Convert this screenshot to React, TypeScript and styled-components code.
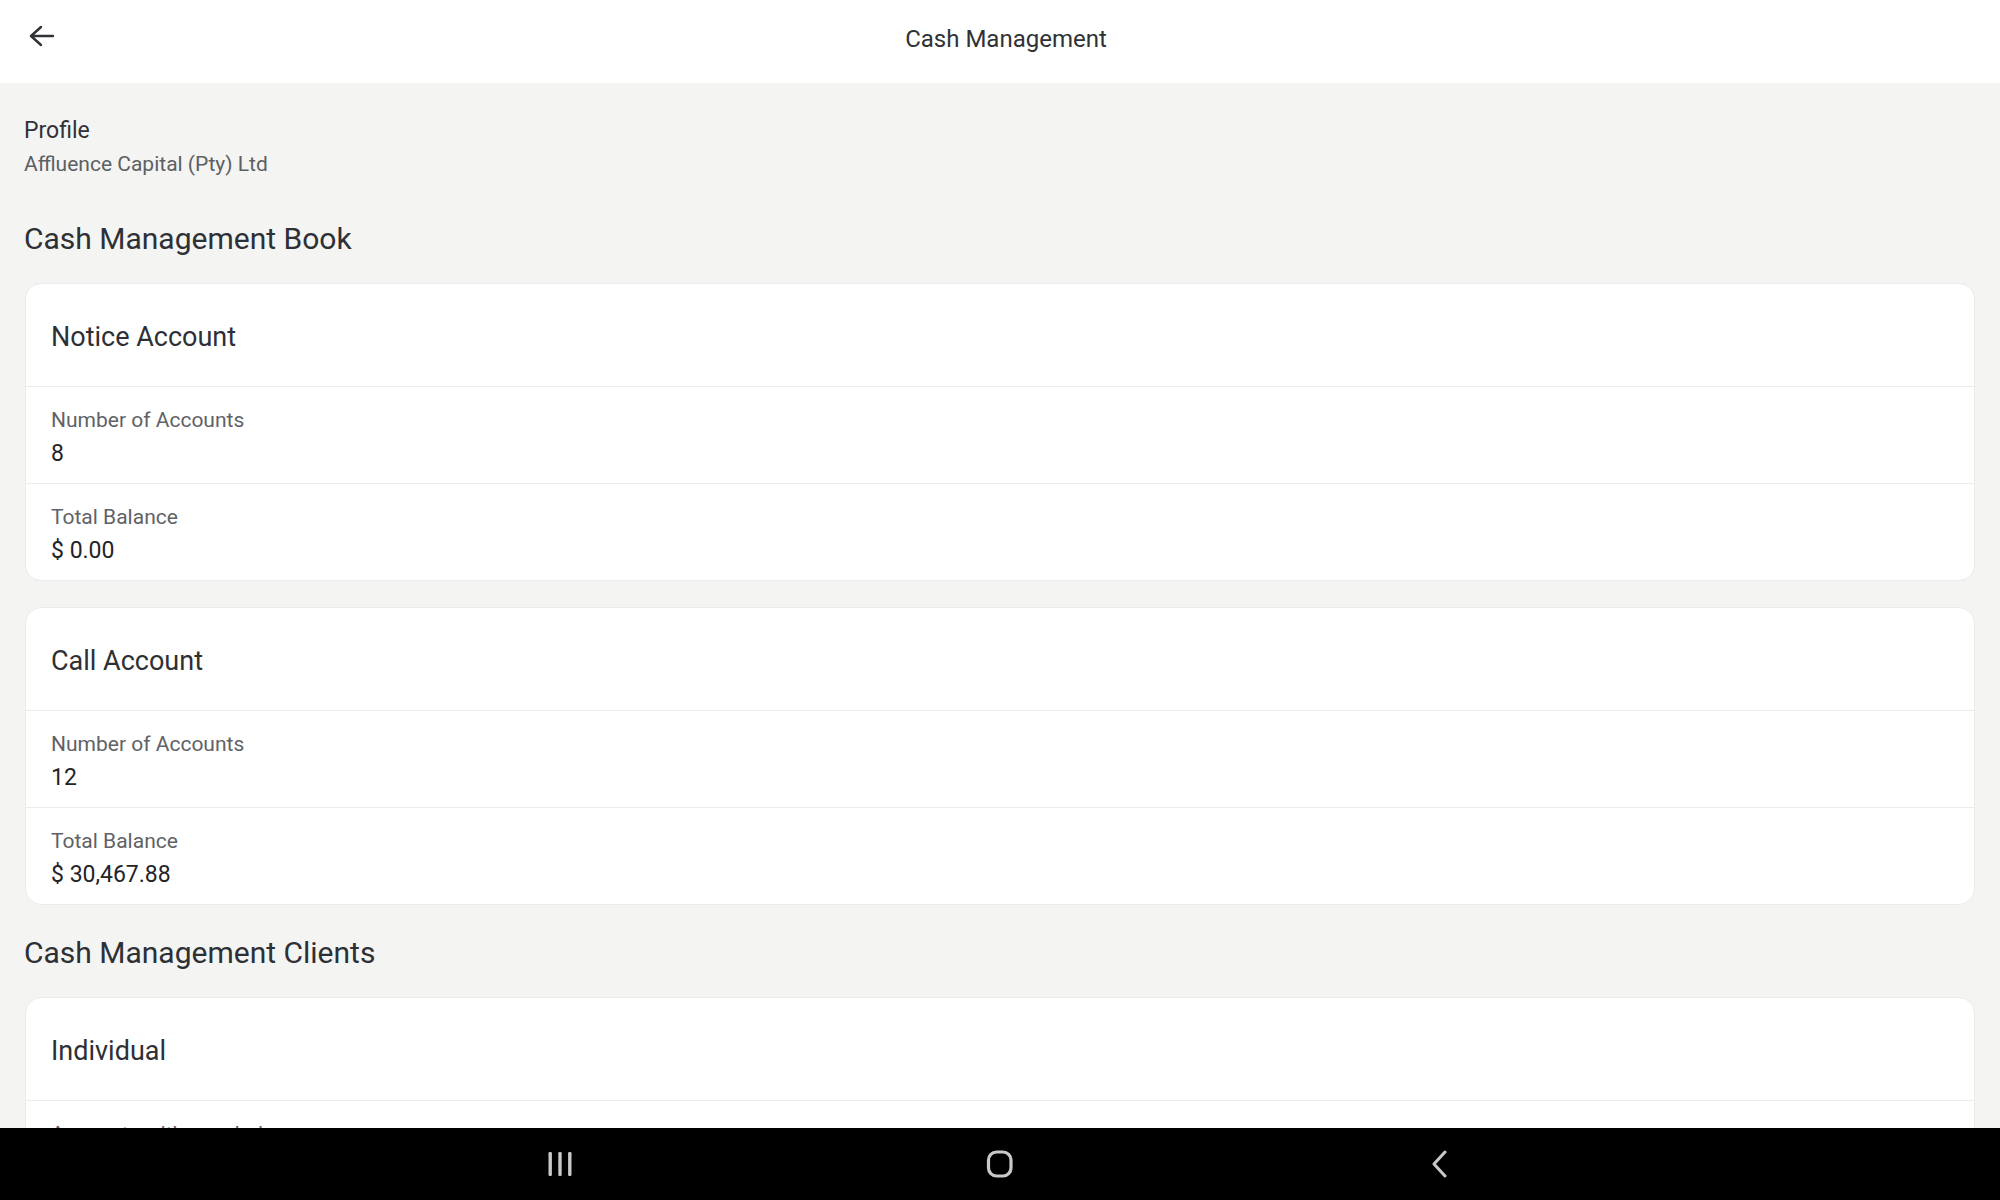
import React from 'react';
import styled, { createGlobalStyle } from 'styled-components';

interface InfoItem {
    label: string;
    value?: string;
}

interface AccountCard {
    title: string;
    items: InfoItem[];
}

const book: AccountCard[] = [
    {
        title: 'Notice Account',
        items: [
            { label: 'Number of Accounts', value: '8' },
            { label: 'Total Balance', value: '$ 0.00' },
        ],
    },
    {
        title: 'Call Account',
        items: [
            { label: 'Number of Accounts', value: '12' },
            { label: 'Total Balance', value: '$ 30,467.88' },
        ],
    },
];

// only the top of the first row peeks out above the system bar
const clients: AccountCard[] = [
    {
        title: 'Individual',
        items: [{ label: 'Accounts with zero balance' }],
    },
];

const GlobalStyle = createGlobalStyle`
    html, body, #root {
        margin: 0;
        height: 100%;
    }

    body {
        font-family: Roboto, "Noto Sans", "Liberation Sans", sans-serif;
        background: #f4f4f2;
        color: #2d3035;
    }
`;

const Screen = styled.div`
    display: flex;
    flex-direction: column;
    height: 100vh;
    overflow: hidden;
`;

const TopBar = styled.header`
    display: grid;
    grid-template-columns: 200px 1fr 200px;
    align-items: center;
    flex: 0 0 83px;
    box-sizing: border-box;
    padding-bottom: 6px;
    background: #ffffff;
`;

const BackButton = styled.button`
    display: flex;
    align-items: center;
    justify-self: start;
    margin: -5px 0 0 28px;
    padding: 0;
    border: none;
    background: none;
    color: #2f3237;
    cursor: pointer;
`;

const TopTitle = styled.h1`
    margin: 0;
    padding-left: 12px;
    font-size: 24px;
    font-weight: 400;
    line-height: 28px;
    text-align: center;
    color: #2f3237;
`;

const Content = styled.main`
    flex: 1;
    overflow: hidden;
    padding: 0 25px 0 24px;
`;

const Profile = styled.section`
    display: flex;
    flex-direction: column;
    padding-top: 32px;
`;

const ProfileLabel = styled.div`
    font-size: 23px;
    line-height: 32px;
    color: #2f3237;
`;

const ProfileName = styled.div`
    font-size: 21px;
    line-height: 34px;
    color: #5c6064;
`;

const SectionTitle = styled.h2<{ $gap: number }>`
    margin: ${({ $gap }) => $gap}px 0 24px;
    font-size: 30px;
    font-weight: 400;
    line-height: 40px;
    color: #2d3035;
`;

const CardList = styled.div`
    display: flex;
    flex-direction: column;
    gap: 26px;
`;

const Card = styled.div`
    display: flex;
    flex-direction: column;
    margin-left: 1px;
    background: #ffffff;
    border: 1px solid #ebebea;
    border-radius: 16px;
    overflow: hidden;
`;

const CardTitle = styled.h3`
    margin: 0;
    padding: 37px 25px 33px;
    font-size: 27px;
    font-weight: 400;
    line-height: 32px;
    color: #2d3035;
    border-bottom: 1px solid #ebebea;
`;

const InfoRow = styled.div`
    display: flex;
    flex-direction: column;
    padding: 17px 25px 12px;

    & + & {
        border-top: 1px solid #ebebea;
    }
`;

const InfoLabel = styled.span`
    font-size: 21px;
    line-height: 32px;
    color: #5f6266;
`;

const InfoValue = styled.span`
    font-size: 23px;
    line-height: 35px;
    color: #222427;
`;

const NavBar = styled.nav`
    display: grid;
    grid-template-columns: repeat(3, 100px);
    justify-content: center;
    align-items: center;
    column-gap: 340px;
    flex: 0 0 72px;
    background: #000000;
`;

const NavKey = styled.span`
    display: flex;
    justify-content: center;
    align-items: center;
    color: #c9c9c9;
`;

const ArrowBack = () => (
    <svg width="28" height="24" viewBox="0 0 28 24" fill="none">
        <path
            d="M3 12H25M13 3L3 12L13 21"
            stroke="currentColor"
            strokeWidth="2.4"
            strokeLinecap="round"
            strokeLinejoin="round"
        />
    </svg>
);

const RecentsIcon = () => (
    <svg width="28" height="26" viewBox="0 0 28 26" fill="currentColor">
        <rect x="2.5" y="1" width="3.4" height="24" rx="1.2" />
        <rect x="12.3" y="1" width="3.4" height="24" rx="1.2" />
        <rect x="22.1" y="1" width="3.4" height="24" rx="1.2" />
    </svg>
);

const HomeIcon = () => (
    <svg width="30" height="30" viewBox="0 0 30 30" fill="none">
        <rect x="3.5" y="3" width="22.5" height="24" rx="8" stroke="currentColor" strokeWidth="3.2" />
    </svg>
);

const BackIcon = () => (
    <svg width="22" height="28" viewBox="0 0 22 28" fill="none">
        <path
            d="M16 2L5 14L16 26"
            stroke="currentColor"
            strokeWidth="3"
            strokeLinecap="round"
            strokeLinejoin="round"
        />
    </svg>
);

const AccountCardView: React.FC<{ card: AccountCard }> = ({ card }) => (
    <Card>
        <CardTitle>{card.title}</CardTitle>
        {card.items.map(({ label, value }) => (
            <InfoRow key={label}>
                <InfoLabel>{label}</InfoLabel>
                {value && <InfoValue>{value}</InfoValue>}
            </InfoRow>
        ))}
    </Card>
);

const App: React.FC = () => (
    <Screen>
        <GlobalStyle />
        <TopBar>
            <BackButton aria-label="Back">
                <ArrowBack />
            </BackButton>
            <TopTitle>Cash Management</TopTitle>
        </TopBar>
        <Content>
            <Profile>
                <ProfileLabel>Profile</ProfileLabel>
                <ProfileName>Affluence Capital (Pty) Ltd</ProfileName>
            </Profile>
            <SectionTitle $gap={38}>Cash Management Book</SectionTitle>
            <CardList>
                {book.map((card) => (
                    <AccountCardView key={card.title} card={card} />
                ))}
            </CardList>
            <SectionTitle $gap={28}>Cash Management Clients</SectionTitle>
            <CardList>
                {clients.map((card) => (
                    <AccountCardView key={card.title} card={card} />
                ))}
            </CardList>
        </Content>
        <NavBar>
            <NavKey>
                <RecentsIcon />
            </NavKey>
            <NavKey>
                <HomeIcon />
            </NavKey>
            <NavKey>
                <BackIcon />
            </NavKey>
        </NavBar>
    </Screen>
);

export default App;
